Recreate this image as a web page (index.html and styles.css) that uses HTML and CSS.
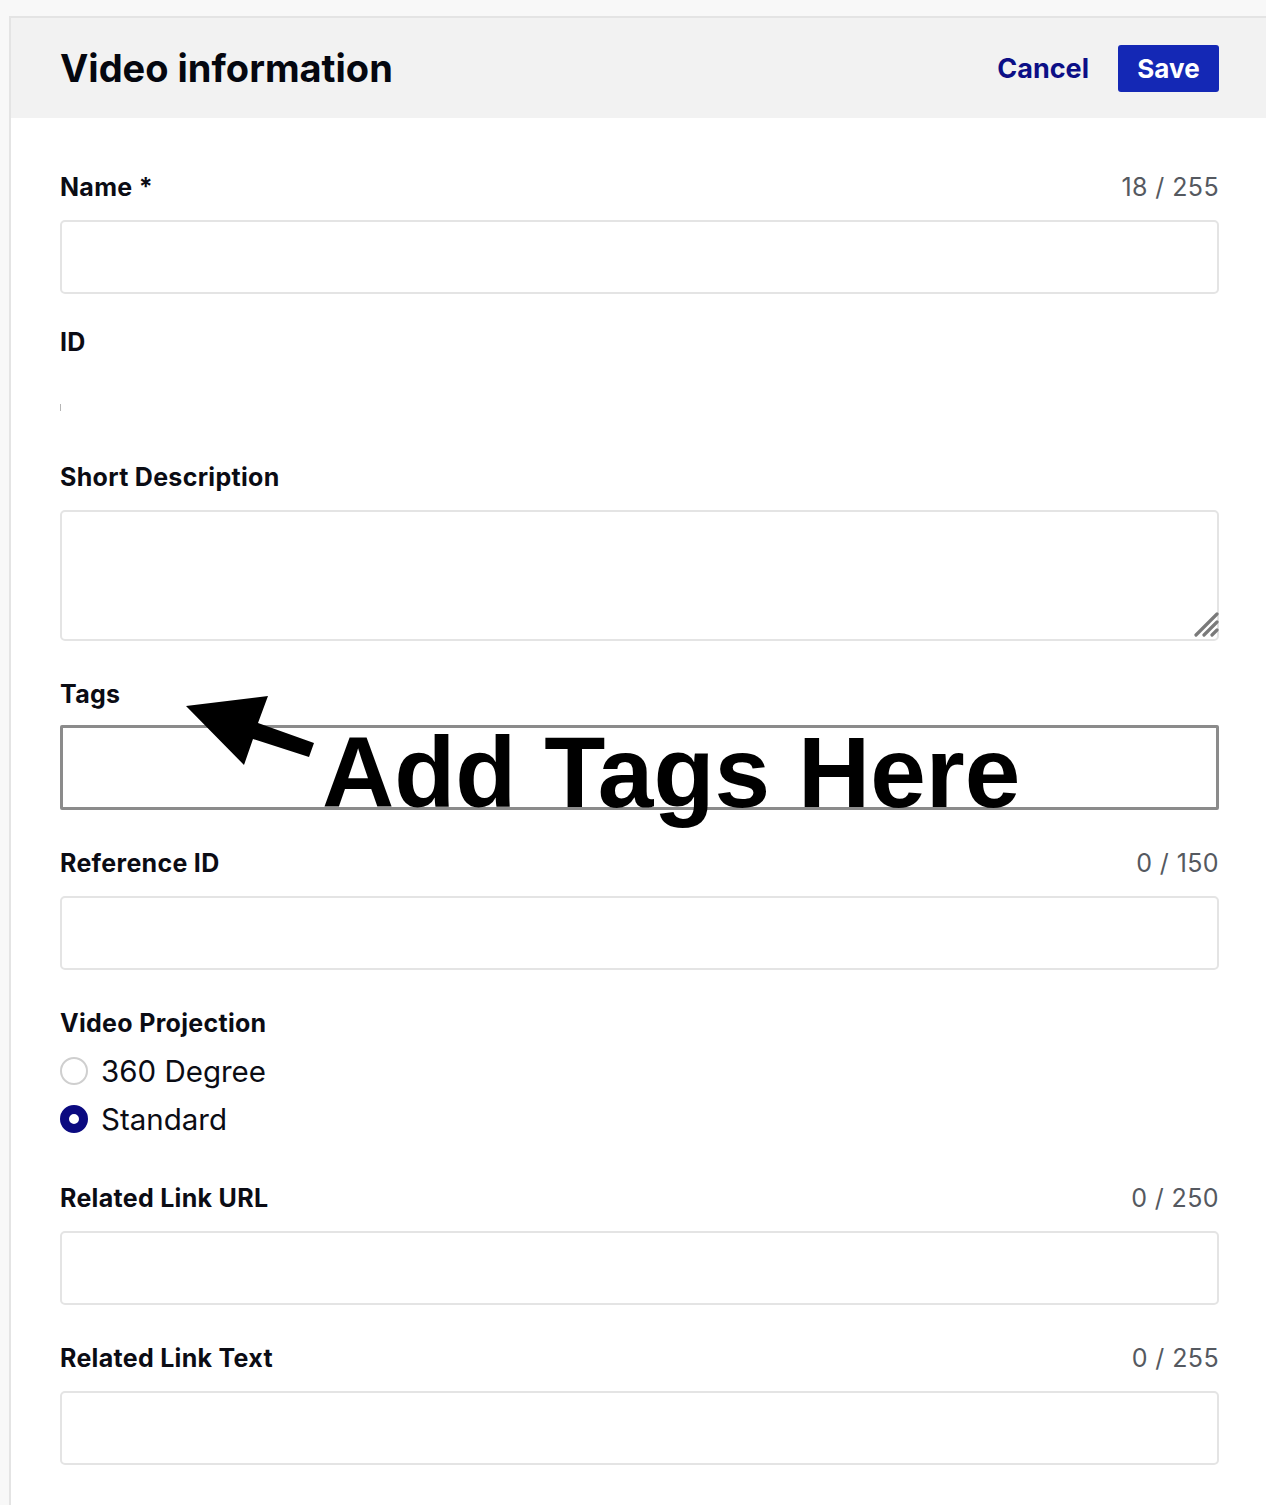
FILE: index.html
```html
<!DOCTYPE html>
<html lang="en">
<head>
    <meta charset="UTF-8">
    <title>Video information</title>
    <link rel="stylesheet" href="styles.css">
</head>
<body>
    <div class="panel">
        <div class="panel-header">
            <h1>Video information</h1>
            <div class="actions">
                <a href="#" class="btn-link">Cancel</a>
                <button class="btn-save">Save</button>
            </div>
        </div>

        <div class="panel-body">
            <!-- name -->
            <div class="field field-first">
                <div class="field-label">
                    <label>Name *</label>
                    <span class="count">18 / 255</span>
                </div>
                <input type="text" class="text-input">
            </div>

            <!-- id -->
            <div class="field field-id">
                <div class="field-label">
                    <label>ID</label>
                </div>
                <div class="id-value"><span class="caret"></span></div>
            </div>

            <!-- short description -->
            <div class="field">
                <div class="field-label">
                    <label>Short Description</label>
                </div>
                <div class="textarea-wrap">
                    <textarea class="text-area"></textarea>
                    <svg class="resizer" width="26" height="26" viewBox="0 0 26 26">
                        <path d="M3 23 L24 2 M11 23 L24 10 M19 23 L24 18" stroke="#7a7a7a" stroke-width="3.2" stroke-linecap="round" fill="none"/>
                    </svg>
                </div>
            </div>

            <!-- tags -->
            <div class="field field-tags">
                <div class="field-label">
                    <label>Tags</label>
                </div>
                <div class="tags-box"></div>
                <svg class="annot-arrow" width="140" height="80" viewBox="180 690 140 80">
                    <polygon points="186,706 268,696 258,723 314,743 309,757 253,739 244,765" fill="#000"/>
                </svg>
                <div class="annot-text">Add Tags Here</div>
            </div>

            <!-- reference id -->
            <div class="field">
                <div class="field-label">
                    <label>Reference ID</label>
                    <span class="count">0 / 150</span>
                </div>
                <input type="text" class="text-input">
            </div>

            <!-- projection -->
            <div class="field field-radios">
                <div class="field-label">
                    <label>Video Projection</label>
                </div>
                <label class="radio-row">
                    <span class="radio"></span>
                    360 Degree
                </label>
                <label class="radio-row">
                    <span class="radio radio-on"></span>
                    Standard
                </label>
            </div>

            <!-- related link url -->
            <div class="field">
                <div class="field-label">
                    <label>Related Link URL</label>
                    <span class="count">0 / 250</span>
                </div>
                <input type="text" class="text-input">
            </div>

            <!-- related link text -->
            <div class="field field-last">
                <div class="field-label">
                    <label>Related Link Text</label>
                    <span class="count">0 / 255</span>
                </div>
                <input type="text" class="text-input">
            </div>
        </div>
    </div>
</body>
</html>
```

FILE: styles.css
```css
* {
    margin: 0;
    padding: 0;
    box-sizing: border-box;
}

body {
    font-family: Inter, 'Liberation Sans', Arial, sans-serif;
    background-color: #f8f8f8;
    color: #0b0c14;
    overflow: hidden;
}

.panel {
    margin: 16px 0 0 9px;
    border-top: 2px solid #e4e4e4;
    border-left: 2px solid #e4e4e4;
    background: white;
    min-height: calc(100vh - 16px);
}

.panel-header {
    height: 100px;
    background: #f2f2f2;
    display: flex;
    align-items: center;
    justify-content: space-between;
    padding: 0 47px 0 49px;
}

.panel-header h1 {
    font-size: 38px;
    font-weight: 700;
    letter-spacing: 0;
    color: #05070f;
}

.actions {
    display: flex;
    align-items: center;
    gap: 29px;
}

.btn-link {
    color: #0c0f86;
    font-size: 27px;
    font-weight: 700;
    text-decoration: none;
}

.btn-save {
    background: #1428b5;
    color: white;
    border: none;
    border-radius: 3px;
    width: 101px;
    height: 47px;
    font-family: inherit;
    font-size: 26px;
    font-weight: 700;
}

.panel-body {
    padding: 54px 47px 0 49px;
}

.field {
    margin-bottom: 38px;
    position: relative;
}

.field-first {
    margin-bottom: 33px;
}

.field-last {
    margin-bottom: 0;
}

.field-label {
    display: flex;
    justify-content: space-between;
    align-items: center;
    height: 30px;
    margin-bottom: 18px;
}

.field-label label {
    font-size: 25px;
    font-weight: 700;
    letter-spacing: 0.3px;
}

.count {
    font-size: 25px;
    letter-spacing: 0.4px;
    color: #555960;
}

.text-input {
    display: block;
    width: 100%;
    height: 74px;
    border: 2px solid #e4e4e4;
    border-radius: 5px;
    background: white;
}

.field-id {
    margin-bottom: 33px;
}

.id-value {
    height: 54px;
    padding-top: 29px;
}

.caret {
    display: block;
    width: 1px;
    height: 7px;
    background: #b5b5b5;
}

.textarea-wrap {
    position: relative;
    height: 131px;
}

.text-area {
    display: block;
    width: 100%;
    height: 131px;
    border: 2px solid #e4e4e4;
    border-radius: 5px;
    resize: none;
}

.resizer {
    position: absolute;
    right: 0;
    bottom: 3px;
}

.field-tags .field-label {
    margin-bottom: 16px;
}

.tags-box {
    height: 85px;
    border: 3px solid #8b8b8b;
    border-radius: 2px;
}

.annot-arrow {
    position: absolute;
    left: 120px;
    top: 11px;
}

.annot-text {
    position: absolute;
    left: 262px;
    top: 36px;
    font-family: 'Liberation Sans', Arial, sans-serif;
    font-size: 100px;
    font-weight: 700;
    line-height: 1.15;
    color: #000;
    white-space: nowrap;
}

.field-radios {
    margin-bottom: 40px;
}

.field-radios .field-label {
    margin-bottom: 9px;
}

.radio-row {
    display: flex;
    align-items: center;
    gap: 13px;
    height: 48px;
    font-size: 29.5px;
}

.radio {
    width: 28px;
    height: 28px;
    border-radius: 50%;
    border: 2px solid #cfcfcf;
    background: white;
}

.radio-on {
    border: 9px solid #0b0a80;
}
```
